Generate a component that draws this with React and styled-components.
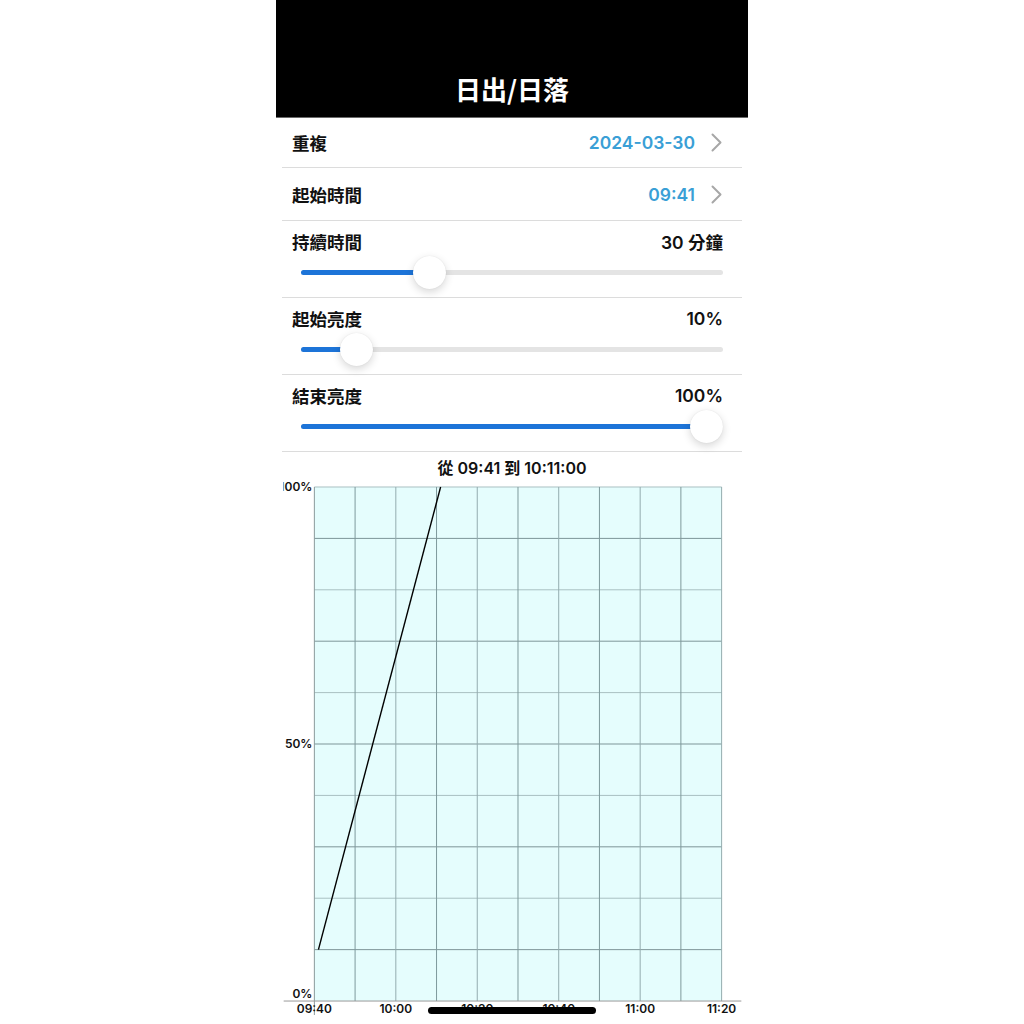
import React from "react";
import styled, { createGlobalStyle } from "styled-components";

const Global = createGlobalStyle`
  html, body { margin: 0; padding: 0; background: #ffffff; }
  body { font-family: "Inter", "Noto Sans CJK TC", "Noto Sans", sans-serif; color: #111; }
`;

const Page = styled.div`
  display: flex;
  justify-content: center;
  width: 100%;
`;

const Phone = styled.div`
  position: relative;
  width: 472px;
  height: 1024px;
  overflow: hidden;
  display: flex;
  flex-direction: column;
  background: #fff;
`;

const Header = styled.header`
  height: 118px;
  background: #000;
  border-bottom: 1px solid #6a6a6a;
  display: flex;
  align-items: flex-end;
  justify-content: center;
  box-sizing: border-box;
  padding-bottom: 12px;
`;

const Title = styled.h1`
  margin: 0;
  color: #fff;
  font-size: 26px;
  line-height: 32px;
  font-weight: 700;
  font-family: "Noto Sans CJK TC", "Inter", sans-serif;
`;

const Row = styled.div`
  height: ${(p) => p.$h}px;
  margin: 0 6px;
  box-sizing: border-box;
  border-bottom: 1px solid #dcdcdc;
  display: flex;
  flex-direction: column;
  justify-content: ${(p) => (p.$slider ? "flex-start" : "center")};
  padding: ${(p) => (p.$slider ? "9px 19px 0 10px" : "0 20px 0 10px")};
`;

const Line = styled.div`
  display: flex;
  align-items: center;
  justify-content: space-between;
  height: 22px;
`;

const Label = styled.span`
  font-family: "Noto Sans CJK TC", sans-serif;
  font-size: 17.5px;
  font-weight: 600;
  color: #111;
`;

const Value = styled.span`
  display: flex;
  align-items: center;
  gap: 16px;
  font-size: 17.5px;
  font-weight: 600;
  color: ${(p) => (p.$blue ? "#3a9fd6" : "#111")};
  font-family: "Inter", "Noto Sans CJK TC", sans-serif;
`;

const SliderBox = styled.div`
  position: relative;
  margin-top: 4px;
  margin-left: 9px;
  height: 33px;
  display: flex;
  align-items: center;
`;

const Track = styled.div`
  position: relative;
  width: 100%;
  height: 5px;
  border-radius: 3px;
  background: #e4e4e4;
`;

const Fill = styled.div`
  position: absolute;
  left: 0;
  top: 0;
  bottom: 0;
  border-radius: 3px;
  background: #1d74d8;
`;

const Thumb = styled.div`
  position: absolute;
  top: 0;
  width: 33px;
  height: 33px;
  margin-left: -16.5px;
  border-radius: 50%;
  background: #fff;
  box-shadow: 0 3px 8px rgba(0, 0, 0, 0.16), 0 0 1px rgba(0, 0, 0, 0.12);
`;

const ChartTitle = styled.div`
  height: 25px;
  display: flex;
  align-items: center;
  justify-content: center;
  font-size: 16px;
  font-weight: 600;
  font-family: "Inter", "Noto Sans CJK TC", sans-serif;
  padding-top: 2px;
`;

const ChartSvg = styled.svg`
  display: block;
  flex: 1;
`;

const HomeBar = styled.div`
  position: absolute;
  left: 50%;
  bottom: 10px;
  width: 168px;
  height: 7px;
  margin-left: -84px;
  border-radius: 4px;
  background: #000;
`;

const Chevron = () => (
  <svg width="11" height="19" viewBox="0 0 11 19">
    <polyline points="1.5,1.5 9.5,9.5 1.5,17.5" fill="none" stroke="#a7a7a7" strokeWidth="2" strokeLinecap="round" strokeLinejoin="round" />
  </svg>
);

const Slider = ({ frac }) => {
  const pos = `calc(16.5px + (100% - 33px) * ${frac})`;
  return (
    <SliderBox>
      <Track>
        <Fill style={{ width: pos }} />
      </Track>
      <Thumb style={{ left: pos }} />
    </SliderBox>
  );
};

const Chart = () => {
  const L = 38, R = 446, T = 8, B = 523;
  const cols = 10, rows = 10;
  const cw = (R - L) / cols, rh = (B - T) / rows;
  const vlines = [];
  for (let i = 1; i <= cols; i++) {
    vlines.push(<line key={"v" + i} x1={L + i * cw} y1={T} x2={L + i * cw} y2={B} stroke={i % 2 ? "#7d999c" : "#93acaf"} strokeWidth="1" />);
  }
  const hlines = [];
  for (let i = 0; i < rows; i++) {
    hlines.push(<line key={"h" + i} x1={L} y1={T + i * rh} x2={R} y2={T + i * rh} stroke={i % 2 ? "#7d9598" : "#a9c0c2"} strokeWidth="1" />);
  }
  const ppm = (R - L) / 100;
  const x1 = L + 1 * ppm, y1 = B - 0.1 * (B - T);
  const x2 = L + 31 * ppm, y2 = T;
  const xl = ["09:40", "10:00", "10:20", "10:40", "11:00", "11:20"];
  const txt = { fontFamily: "Inter, 'Noto Sans', sans-serif", fontSize: 12, fontWeight: 600, fill: "#111" };
  return (
    <ChartSvg width="472" height="546" viewBox="0 0 472 546">
      <defs>
        <clipPath id="cc">
          <rect x="7" y="0" width="459" height="546" />
        </clipPath>
      </defs>
      <g clipPath="url(#cc)">
        <rect x={L} y={T} width={R - L} height={B - T} fill="#e5fdfd" />
        {hlines}
        {vlines}
        <line x1={L} y1={T} x2={L} y2={B + 14} stroke="#8a9a9c" strokeWidth="1" />
        <line x1="7" y1={B} x2="466" y2={B} stroke="#9a9a9a" strokeWidth="1" />
        <line x1={x1} y1={y1} x2={x2} y2={y2} stroke="#000" strokeWidth="1.4" />
        <text x="36" y={T + 4} textAnchor="end" style={txt}>100%</text>
        <text x="36" y={T + (B - T) / 2 + 4} textAnchor="end" style={txt}>50%</text>
        <text x="36" y={B - 3} textAnchor="end" style={txt}>0%</text>
        {xl.map((t, i) => (
          <text key={t} x={L + i * 2 * cw} y={B + 12} textAnchor="middle" style={txt}>{t}</text>
        ))}
      </g>
    </ChartSvg>
  );
};

export default function App() {
  return (
    <Page>
      <Global />
      <Phone>
        <Header>
          <Title>日出/日落</Title>
        </Header>
        <Row $h={50}>
          <Line>
            <Label>重複</Label>
            <Value $blue>2024-03-30<Chevron /></Value>
          </Line>
        </Row>
        <Row $h={53}>
          <Line>
            <Label>起始時間</Label>
            <Value $blue>09:41<Chevron /></Value>
          </Line>
        </Row>
        <Row $h={77} $slider>
          <Line>
            <Label>持續時間</Label>
            <Value>30 分鐘</Value>
          </Line>
          <Slider frac={0.287} />
        </Row>
        <Row $h={77} $slider>
          <Line>
            <Label>起始亮度</Label>
            <Value>10%</Value>
          </Line>
          <Slider frac={0.1} />
        </Row>
        <Row $h={77} $slider>
          <Line>
            <Label>結束亮度</Label>
            <Value>100%</Value>
          </Line>
          <Slider frac={1} />
        </Row>
        <ChartTitle>從 09:41 到 10:11:00</ChartTitle>
        <Chart />
        <HomeBar />
      </Phone>
    </Page>
  );
}
